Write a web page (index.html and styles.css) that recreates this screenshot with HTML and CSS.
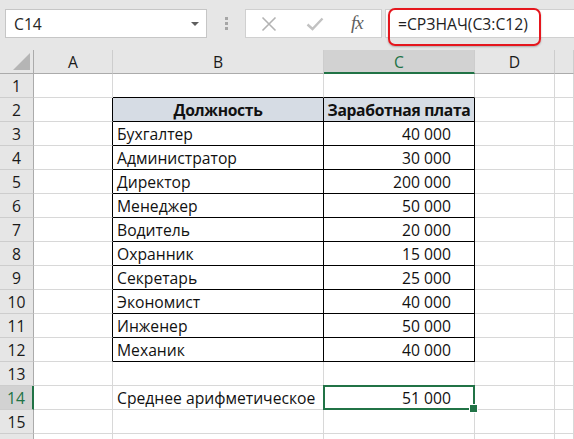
FILE: index.html
```html
<!DOCTYPE html>
<html lang="ru">
<head>
<meta charset="utf-8">
<title>Excel</title>
<link rel="stylesheet" href="styles.css">
</head>
<body>
<div class="toolbar">
  <div class="namebox"><span class="nametext">C14</span><span class="caret"></span></div>
  <div class="grip"><i></i><i></i><i></i></div>
  <div class="fbtns">
    <svg class="ico-x" width="16" height="16" viewBox="0 0 16 16"><path d="M1.5 1.5 L14.5 14.5 M14.5 1.5 L1.5 14.5" stroke="#b3b3b3" stroke-width="1.6" fill="none"/></svg>
    <svg class="ico-ok" width="18" height="14" viewBox="0 0 18 14"><path d="M1.5 7.5 L6.5 12 L16.5 1.5" stroke="#c2c2c2" stroke-width="2.4" fill="none"/></svg>
    <span class="fx">fx</span>
  </div>
  <div class="formula"><span class="ftext">=СРЗНАЧ(C3:C12)</span><div class="mark"></div></div>
</div>
<div class="sheet">
  <div class="corner"><span class="tri"></span></div>
  <div class="ch">A</div><div class="ch">B</div><div class="ch sel">C</div><div class="ch">D</div><div class="ch"></div>

  <div class="rh">1</div><div class="c"></div><div class="c tt"></div><div class="c tt"></div><div class="c"></div><div class="c"></div>
  <div class="rh">2</div><div class="c tl"></div><div class="c t th">Должность</div><div class="c t th">Заработная плата</div><div class="c"></div><div class="c"></div>
  <div class="rh">3</div><div class="c tl"></div><div class="c t">Бухгалтер</div><div class="c t num">40 000</div><div class="c"></div><div class="c"></div>
  <div class="rh">4</div><div class="c tl"></div><div class="c t">Администратор</div><div class="c t num">30 000</div><div class="c"></div><div class="c"></div>
  <div class="rh">5</div><div class="c tl"></div><div class="c t">Директор</div><div class="c t num">200 000</div><div class="c"></div><div class="c"></div>
  <div class="rh">6</div><div class="c tl"></div><div class="c t">Менеджер</div><div class="c t num">50 000</div><div class="c"></div><div class="c"></div>
  <div class="rh">7</div><div class="c tl"></div><div class="c t">Водитель</div><div class="c t num">20 000</div><div class="c"></div><div class="c"></div>
  <div class="rh">8</div><div class="c tl"></div><div class="c t">Охранник</div><div class="c t num">15 000</div><div class="c"></div><div class="c"></div>
  <div class="rh">9</div><div class="c tl"></div><div class="c t">Секретарь</div><div class="c t num">25 000</div><div class="c"></div><div class="c"></div>
  <div class="rh">10</div><div class="c tl"></div><div class="c t">Экономист</div><div class="c t num">40 000</div><div class="c"></div><div class="c"></div>
  <div class="rh">11</div><div class="c tl"></div><div class="c t">Инженер</div><div class="c t num">50 000</div><div class="c"></div><div class="c"></div>
  <div class="rh">12</div><div class="c tl"></div><div class="c t">Механик</div><div class="c t num">40 000</div><div class="c"></div><div class="c"></div>
  <div class="rh">13</div><div class="c"></div><div class="c"></div><div class="c"></div><div class="c"></div><div class="c"></div>
  <div class="rh sel">14</div><div class="c"></div><div class="c">Среднее арифметическое</div><div class="c num active">51 000</div><div class="c"></div><div class="c"></div>
  <div class="rh">15</div><div class="c"></div><div class="c"></div><div class="c"></div><div class="c"></div><div class="c"></div>
  <div class="rh"></div><div class="c"></div><div class="c"></div><div class="c"></div><div class="c"></div><div class="c"></div>
</div>
</body>
</html>
```
FILE: styles.css
```css
* { box-sizing: border-box; }
html, body { margin: 0; padding: 0; }
body {
  width: 574px;
  height: 439px;
  overflow: hidden;
  background: #ffffff;
  font-family: "Open Sans", "Liberation Sans", sans-serif;
  color: #111;
}

.toolbar {
  height: 50px;
  background: #e6e6e6;
  display: flex;
  align-items: flex-start;
  padding: 9px 0 0 5px;
}
.namebox {
  width: 202px;
  height: 29px;
  background: #fff;
  border: 1px solid #c6c6c6;
  display: flex;
  align-items: center;
  padding: 0 7px 0 8px;
}
.nametext { font-size: 15.7px; color: #262626; }
.caret {
  margin-left: auto;
  width: 0; height: 0;
  border-left: 4px solid transparent;
  border-right: 4px solid transparent;
  border-top: 4px solid #5e5e5e;
}
.grip {
  width: 38px;
  height: 29px;
  display: flex;
  flex-direction: column;
  align-items: center;
  justify-content: center;
  gap: 2px;
}
.grip i {
  display: block;
  width: 3px;
  height: 3px;
  background: #a6a6a6;
}
.fbtns {
  width: 137px;
  height: 29px;
  background: #fff;
  border: 1px solid #d0d0d0;
  display: flex;
  align-items: center;
  padding-left: 15px;
}
.ico-x { margin-right: 29px; }
.ico-ok { margin-right: 27px; }
.fx {
  font-family: "Liberation Serif", "DejaVu Serif", serif;
  font-style: italic;
  font-size: 19px;
  color: #5f5f5f;
  letter-spacing: -1px;
  margin-top: -2px;
}
.formula {
  position: relative;
  margin-left: 3px;
  flex: 1;
  height: 29px;
  background: #fff;
  border: 1px solid #d0d0d0;
  border-right: none;
  display: flex;
  align-items: center;
  padding-left: 12px;
}
.ftext { font-size: 15.7px; color: #1e1e1e; }
.mark {
  position: absolute;
  left: 2px;
  top: -2px;
  width: 153px;
  height: 38px;
  border: 2px solid #e5161d;
  border-radius: 7px;
  box-shadow: 0 1px 2px rgba(0,0,0,0.25);
}

.sheet {
  display: grid;
  grid-template-columns: 34px 79px 211px 151px 80px 1fr;
  grid-auto-rows: 24px;
}
.corner {
  background: #e6e6e6;
  border-right: 1px solid #ababab;
  border-bottom: 1px solid #ababab;
  position: relative;
}
.tri {
  position: absolute;
  right: 3px;
  bottom: 3px;
  width: 0; height: 0;
  border-left: 17px solid transparent;
  border-bottom: 17px solid #b5b5b5;
}
.ch {
  background: #e6e6e6;
  border-right: 1px solid #cdcdcd;
  border-bottom: 1px solid #ababab;
  text-align: center;
  font-size: 15.7px;
  line-height: 24px;
  color: #1a1a1a;
}
.ch.sel {
  background: #d2d2d2;
  color: #217346;
  border-bottom: 2px solid #217346;
}
.rh {
  background: #e6e6e6;
  border-right: 1px solid #ababab;
  border-bottom: 1px solid #cdcdcd;
  text-align: center;
  font-size: 15.7px;
  line-height: 25px;
  color: #1a1a1a;
}
.rh.sel {
  background: #d2d2d2;
  color: #217346;
  border-right: 2px solid #217346;
}
.c {
  border-right: 1px solid #d8d8d8;
  border-bottom: 1px solid #d8d8d8;
  font-size: 15.7px;
  line-height: 25px;
  padding: 0 4px;
  white-space: nowrap;
  color: #111;
}
.tt { border-bottom-color: #000; }
.tl { border-right-color: #000; }
.t { border-right-color: #000; border-bottom-color: #000; }
.th {
  background: #d6dce4;
  font-weight: bold;
  text-align: center;
  padding: 0;
  letter-spacing: -0.35px;
}
.num { text-align: right; padding-right: 23px; }
.active { position: relative; }
.active::after {
  content: "";
  position: absolute;
  left: -1px;
  top: -1px;
  right: -1px;
  bottom: -1px;
  border: 2px solid #217346;
}
.active::before {
  content: "";
  position: absolute;
  right: -4px;
  bottom: -4px;
  width: 7px;
  height: 7px;
  background: #217346;
  border: 1px solid #fff;
  z-index: 2;
}
```
